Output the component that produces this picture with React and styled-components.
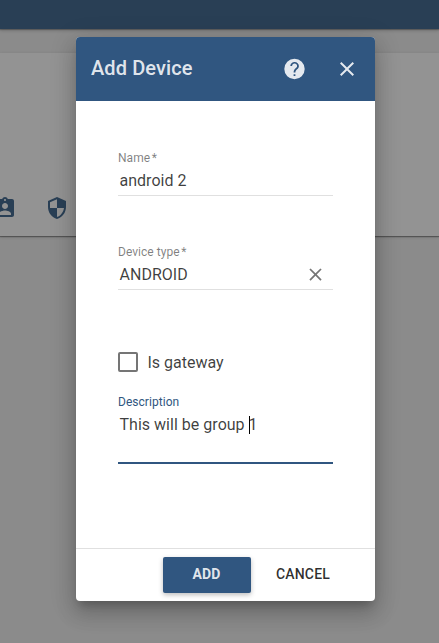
import React from "react";
import styled, { createGlobalStyle } from "styled-components";

const GlobalStyle = createGlobalStyle`
  * { box-sizing: border-box; }
  body {
    margin: 0;
    overflow: hidden;
    font-family: Roboto, "Liberation Sans", sans-serif;
    color: rgba(0, 0, 0, 0.76);
  }
  button { font-family: inherit; }
`;

const Page = styled.div`
  position: relative;
  width: 439px;
  height: 643px;
  overflow: hidden;
  display: flex;
  flex-direction: column;
  background: #8b8b8b;
`;

const AppBar = styled.div`
  position: relative;
  height: 29px;
  flex: none;
  background: #293f55;
  box-shadow: 0 1px 1px rgba(0, 0, 0, 0.24), 0 2px 3px rgba(0, 0, 0, 0.14);
`;

const Card = styled.div`
  display: flex;
  align-items: flex-end;
  gap: 28px;
  height: 183px;
  margin-top: 24px;
  padding: 0 0 16px;
  flex: none;
  background: #939393;
  box-shadow: 0 1px 1px rgba(0, 0, 0, 0.32), 0 1px 3px rgba(0, 0, 0, 0.16);
`;

const Glyph = styled.svg`
  display: block;
  flex: none;
  width: ${(p) => p.$size || 24}px;
  height: ${(p) => p.$size || 24}px;
  margin-left: ${(p) => p.$offset || 0}px;
  fill: ${(p) => p.$color || "currentColor"};
`;

const Dialog = styled.form`
  position: absolute;
  left: 76px;
  top: 37px;
  width: 299px;
  height: 564px;
  display: flex;
  flex-direction: column;
  overflow: hidden;
  border-radius: 4px;
  background: #fff;
  box-shadow: 0 7px 8px -4px rgba(0, 0, 0, 0.2),
    0 13px 19px 2px rgba(0, 0, 0, 0.14), 0 5px 24px 4px rgba(0, 0, 0, 0.12);
`;

const Header = styled.header`
  display: flex;
  align-items: center;
  height: 64px;
  flex: none;
  padding: 0 16px 0 15px;
  background: #305680;
  color: rgba(255, 255, 255, 0.87);
`;

const Title = styled.h2`
  flex: 1;
  margin: 0;
  padding-bottom: 2px;
  font-size: 20px;
  font-weight: 500;
  line-height: 24px;
  letter-spacing: 0.1px;
`;

const HeaderActions = styled.div`
  display: flex;
  gap: 28.5px;
`;

const Content = styled.div`
  flex: 1;
  padding: 50px 42px 0;
`;

const Field = styled.label`
  display: block;
  height: ${(p) => p.$height || 45}px;
  margin-bottom: ${(p) => p.$gap || 0}px;
  border-bottom: ${(p) => (p.$focused ? "2px solid #305680" : "1px solid #e0e0e0")};
`;

const Label = styled.span`
  display: block;
  height: 14px;
  font-size: 12px;
  line-height: 14px;
  letter-spacing: 0.04px;
  color: ${(p) => (p.$focused ? "#305680" : "rgba(0, 0, 0, 0.5)")};
`;

const Required = styled.span`
  margin-left: 1.5px;
`;

const Value = styled.div`
  display: flex;
  align-items: center;
  justify-content: space-between;
  height: 31px;
  padding: 0 7.5px 0 1.5px;
  font-size: 16px;
  letter-spacing: 0.02px;
  white-space: pre;
`;

const Caret = styled.span`
  display: inline-block;
  width: 1px;
  height: 18px;
  margin-right: -1px;
  vertical-align: -4px;
  background: #000;
`;

const CheckRow = styled.label`
  display: flex;
  align-items: center;
  height: 20px;
  margin-bottom: 23px;
  gap: 9.5px;
  font-size: 16px;
  letter-spacing: 0;
`;

const Box = styled.span`
  width: 20px;
  height: 20px;
  border: 2px solid rgba(0, 0, 0, 0.54);
  border-radius: 2px;
`;

const Footer = styled.footer`
  display: flex;
  align-items: center;
  gap: 9px;
  height: 53px;
  padding-left: 87px;
  border-top: 1px solid #e0e0e0;
`;

const Button = styled.button`
  width: ${(p) => (p.$primary ? 88 : 87)}px;
  height: 36px;
  padding: 0 1px 2px 0;
  border: 0;
  border-radius: 2px;
  font-size: 14px;
  font-weight: ${(p) => (p.$primary ? 700 : 500)};
  letter-spacing: 0.14px;
  color: ${(p) => (p.$primary ? "rgba(255, 255, 255, 0.87)" : "rgba(0, 0, 0, 0.82)")};
  background: ${(p) => (p.$primary ? "#305680" : "transparent")};
  box-shadow: ${(p) => (p.$primary ? "0 2px 5px rgba(0, 0, 0, 0.26)" : "none")};
`;

const CLOSE =
  "M19 6.41 17.59 5 12 10.59 6.41 5 5 6.41 10.59 12 5 17.59 6.41 19 12 13.41 17.59 19 19 17.59 13.41 12z";

export default function App() {
  return (
    <>
      <GlobalStyle />
      <Page>
        <AppBar />
        <Card>
          <Glyph viewBox="0 0 24 24" $offset={-7} $color="#293f55">
            <path d="M19 3h-4.18C14.4 1.84 13.3 1 12 1s-2.4.84-2.82 2H5c-1.1 0-2 .9-2 2v14c0 1.1.9 2 2 2h14c1.1 0 2-.9 2-2V5c0-1.1-.9-2-2-2zm-7 0c.55 0 1 .45 1 1s-.45 1-1 1-1-.45-1-1 .45-1 1-1zm0 4c1.66 0 3 1.34 3 3s-1.34 3-3 3-3-1.34-3-3 1.34-3 3-3zm6 12H6v-1.4c0-2 4-3.1 6-3.1s6 1.1 6 3.1V19z" />
          </Glyph>
          <Glyph viewBox="0 0 24 24" $color="#293f55">
            <path d="M12 1 3 5v6c0 5.55 3.84 10.74 9 12 5.16-1.26 9-6.45 9-12V5l-9-4zm0 10.99h7c-.53 4.12-3.28 7.79-7 8.94V12H5V6.3l7-3.11v8.8z" />
          </Glyph>
        </Card>

        <Dialog>
          <Header>
            <Title>Add Device</Title>
            <HeaderActions>
              <Glyph viewBox="0 0 24 24">
                <path
                  fillRule="evenodd"
                  d="M11.5 1.8a10.2 10.2 0 1 0 0 20.4 10.2 10.2 0 0 0 0-20.4zM10.6 17.2h1.8v1.8h-1.8zM7.300 9.100C7.300 6.600 9.200 4.900 11.600 4.900s4.300 1.700 4.300 4c0 1.600-.8 2.500-1.800 3.400-1.100 1-1.700 1.600-1.700 3.300h-1.800c0-2.300.9-3.300 2-4.300.9-.8 1.500-1.400 1.500-2.400 0-1.400-1-2.400-2.500-2.400S9.100 7.600 9.100 9.100z"
                />
              </Glyph>
              <Glyph viewBox="0 0 24 24">
                <path d={CLOSE} />
              </Glyph>
            </HeaderActions>
          </Header>

          <Content>
            <Field $gap={49}>
              <Label>Name<Required>*</Required></Label>
              <Value>android 2</Value>
            </Field>
            <Field $gap={62}>
              <Label>Device type<Required>*</Required></Label>
              <Value>
                ANDROID
                <Glyph viewBox="0 0 24 24" $size={21} $color="#757575">
                  <path d={CLOSE} />
                </Glyph>
              </Value>
            </Field>
            <CheckRow>
              <Box />
              Is gateway
            </CheckRow>
            <Field $height={69} $focused>
              <Label $focused>Description</Label>
              <Value>
                <span>
                  This will be group <Caret />1
                </span>
              </Value>
            </Field>
          </Content>

          <Footer>
            <Button type="button" $primary>ADD</Button>
            <Button type="button">CANCEL</Button>
          </Footer>
        </Dialog>
      </Page>
    </>
  );
}
